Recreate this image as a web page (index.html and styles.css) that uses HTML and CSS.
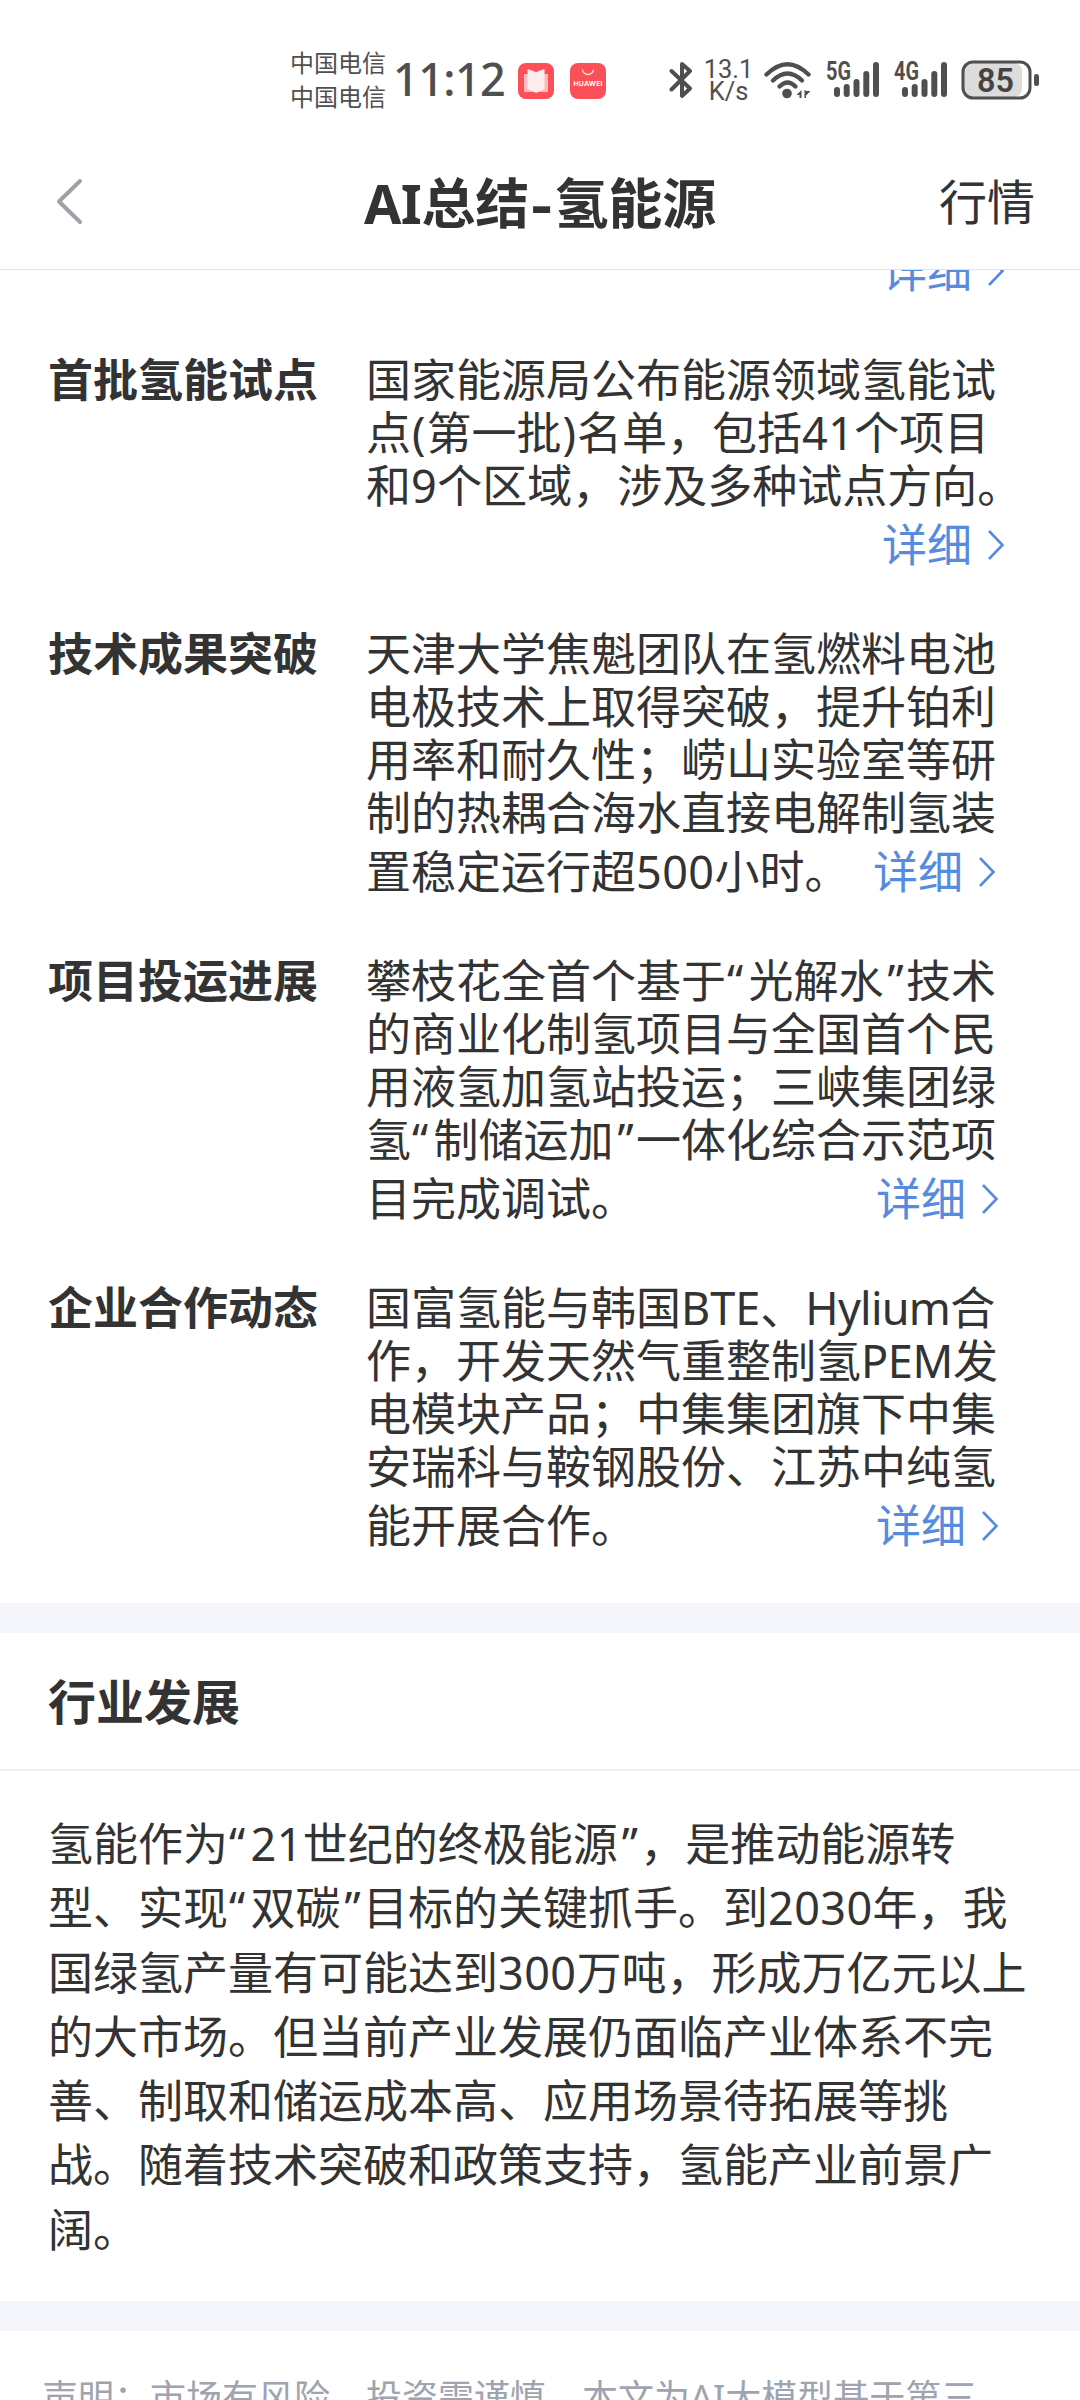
FILE: index.html
```html
<!DOCTYPE html>
<html lang="zh-CN">
<head>
<meta charset="utf-8">
<title>AI总结-氢能源</title>
<link rel="stylesheet" href="styles.css">
</head>
<body>
<div class="status">
  <div class="carriers"><span>中国电信</span><span>中国电信</span></div>
  <div class="clock">11:12</div>
  <svg class="app app-book" width="36" height="36" viewBox="0 0 36 36"><rect width="36" height="36" rx="8" fill="#fb5058"/><path d="M6 11h24v18H21l-3 1-3-1H6z" fill="#ffb9bb"/><path d="M9.500 6l8.500 3 8.500-3v20L18 29.500 9.500 26z" fill="#ffecec"/><path d="M15 6l3 3.500L21 6z" fill="#fb5058"/></svg>
  <svg class="app app-store" width="36" height="36" viewBox="0 0 36 36"><rect width="36" height="36" rx="8" fill="#fb5058"/><path d="M12.500 6.500a5.500 5 0 0 0 11 0" fill="none" stroke="#ffdcdc" stroke-width="1.300"/><text x="18" y="22.700" text-anchor="middle" textLength="29" font-size="6.800" font-weight="700" fill="#fff">HUAWEI</text></svg>
  <svg class="bt" width="24" height="38" viewBox="0 0 24 38" fill="none" stroke="#4f4f4f" stroke-width="4" stroke-linecap="round" stroke-linejoin="round"><path d="M2.500 10l18.500 17.500-8 7.500V3l8 7L2.500 28.500"/></svg>
  <div class="speed"><span>13.1</span><span>K/s</span></div>
  <svg class="wifi" width="48" height="38" viewBox="0 0 48 38"><g fill="none" stroke="#4f4f4f" stroke-width="4.400" stroke-linecap="round"><path d="M2.500 13.500Q23.500-7 44.500 13.500"/><path d="M9 19.500Q23.500 5.500 38 19.500"/><path d="M15.500 25.500Q23.500 17.500 31.500 25.500"/></g><circle cx="23" cy="32.500" r="4.800" fill="#4f4f4f"/><path d="M37.500 29v8h-2v-3h-3zM40.500 29v8h1.500v-2.500l4.500-4.500h-4z" fill="#4f4f4f"/></svg>
  <svg class="cell" width="54" height="38" viewBox="0 0 54 38"><text x="0" y="18.500" textLength="25" lengthAdjust="spacingAndGlyphs" font-size="25" font-weight="700" fill="#4f4f4f">5G</text><g stroke="#4f4f4f" stroke-width="6" stroke-linecap="round"><path d="M11 29v4M20.700 26v7M30.500 21v12M40.300 13v20M50 4v29"/></g></svg>
  <svg class="cell" width="54" height="38" viewBox="0 0 54 38"><text x="0" y="18.500" textLength="25" lengthAdjust="spacingAndGlyphs" font-size="25" font-weight="700" fill="#4f4f4f">4G</text><g stroke="#4f4f4f" stroke-width="6" stroke-linecap="round"><path d="M11 29v4M20.700 26v7M30.500 21v12M40.300 13v20M50 4v29"/></g></svg>
  <svg class="battery" width="80" height="40" viewBox="0 0 80 40"><rect x="3" y="3" width="58" height="34" rx="8" fill="#dcdcdc"/><rect x="2" y="2" width="67" height="36" rx="10" fill="none" stroke="#4f4f4f" stroke-width="3"/><rect x="73" y="14" width="5" height="12" rx="2.500" fill="#4f4f4f"/><text x="34.500" y="32" text-anchor="middle" font-size="34" font-weight="600" textLength="37" lengthAdjust="spacingAndGlyphs" fill="#444">85</text></svg>
</div>
<header class="header">
  <svg class="back" width="27" height="47" viewBox="0 0 27 47" fill="none" stroke="#a0a0a9" stroke-width="4" stroke-linecap="round" stroke-linejoin="round"><path d="M24 3L3 23.500 24 44"/></svg>
  <h1><span class="ai">AI</span>总结<span class="dash">-</span>氢能源</h1>
  <a class="quote">行情</a>
</header>
<main class="list">
  <section class="item item-cut">
    <div class="body"><p class="last"><a class="more">详细<svg width="18" height="32" viewBox="0 0 18 32"><path d="M2 2l13.500 14L2 30"/></svg></a></p></div>
  </section>
  <section class="item">
    <h2>首批氢能试点</h2>
    <div class="body"><p>国家能源局公布能源领域氢能试</p><p>点<i class="paren">(</i>第一批<i class="paren">)</i>名单，包括<b>41</b>个项目</p><p>和<b>9</b>个区域，涉及多种试点方向。</p><p class="last"><a class="more">详细<svg width="18" height="32" viewBox="0 0 18 32"><path d="M2 2l13.500 14L2 30"/></svg></a></p></div>
  </section>
  <section class="item">
    <h2>技术成果突破</h2>
    <div class="body"><p>天津大学焦魁团队在氢燃料电池</p><p>电极技术上取得突破，提升铂利</p><p>用率和耐久性；崂山实验室等研</p><p>制的热耦合海水直接电解制氢装</p><p class="last">置稳定运行超<b>500</b>小时。<a class="more inset-l">详细<svg width="18" height="32" viewBox="0 0 18 32"><path d="M2 2l13.500 14L2 30"/></svg></a></p></div>
  </section>
  <section class="item">
    <h2>项目投运进展</h2>
    <div class="body"><p>攀枝花全首个基于<i class="open">“</i>光解水<i class="close">”</i>技术</p><p>的商业化制氢项目与全国首个民</p><p>用液氢加氢站投运；三峡集团绿</p><p>氢<i class="open">“</i>制储运加<i class="close">”</i>一体化综合示范项</p><p class="last">目完成调试。<a class="more inset-s">详细<svg width="18" height="32" viewBox="0 0 18 32"><path d="M2 2l13.500 14L2 30"/></svg></a></p></div>
  </section>
  <section class="item">
    <h2>企业合作动态</h2>
    <div class="body"><p>国富氢能与韩国BTE、<span class="hyl">Hylium</span>合</p><p>作，开发天然气重整制氢<span class="pem">PEM</span>发</p><p>电模块产品；中集集团旗下中集</p><p>安瑞科与鞍钢股份、江苏中纯氢</p><p class="last">能开展合作。<a class="more inset-s">详细<svg width="18" height="32" viewBox="0 0 18 32"><path d="M2 2l13.500 14L2 30"/></svg></a></p></div>
  </section>
</main>
<section class="industry">
  <h2>行业发展</h2>
  <div class="article"><p>氢能作为<i class="open">“</i><b>21</b>世纪的终极能源<i class="close">”</i>，是推动能源转</p><p>型、实现<i class="open">“</i>双碳<i class="close">”</i>目标的关键抓手。到<b>2030</b>年，我</p><p>国绿氢产量有可能达到<b>300</b>万吨，形成万亿元以上</p><p>的大市场。但当前产业发展仍面临产业体系不完</p><p>善、制取和储运成本高、应用场景待拓展等挑</p><p>战。随着技术突破和政策支持，氢能产业前景广</p><p>阔。</p></div>
</section>
<footer class="notice">声明：市场有风险，投资需谨慎，本文为AI大模型基于第三</footer>
</body>
</html>
```
FILE: styles.css
```css
* { box-sizing: border-box; margin: 0; padding: 0; }
body {
  width: 1080px; height: 2400px; overflow: hidden; background: #fff; color: #333;
  display: flex; flex-direction: column;
  font-family: "Noto Sans", "Noto Sans CJK SC", sans-serif; font-size: 45px; white-space: nowrap;
}
body > * { flex: none; }
i, b { font-style: normal; font-weight: 400; }

.status { height: 134px; padding: 26px 0 0 290px; display: flex; align-items: flex-start; color: #4f4f4f; }
.status svg { flex: none; }
.status text { font-family: Roboto, sans-serif; }
.carriers { width: 103px; margin-top: 20px; display: flex; flex-direction: column; font-size: 24px; line-height: 34px; }
.clock { width: 125px; margin-top: 28px; font-size: 45px; line-height: 50px; font-weight: 500; letter-spacing: -.6px; }
.app { margin-top: 37px; }
.app-store { margin-left: 16px; }
.status .app-store text { font-family: Inter, sans-serif; }
.bt { margin: 35px 0 0 63px; }
.speed { width: 71px; margin-top: 32px; display: flex; flex-direction: column; align-items: center; font: 25.500px/22px Roboto, sans-serif; }
.wifi { margin-top: 35px; }
.cell { margin: 35px 0 0 14px; }
.battery { margin: 34px 0 0 13px; }

.header { height: 136px; padding: 0 45px 0 56px; display: grid; grid-template-columns: 308px 1fr auto; align-items: center; border-bottom: 1px solid #e4e4e6; }
.header h1 { padding-top: 3px; font-size: 54px; line-height: 80px; font-weight: 700; }
.ai { letter-spacing: -.5px; }
.dash { display: inline-block; width: 25px; text-align: center; transform: scaleX(1.2); }
.quote { padding-top: 1px; font-size: 48px; line-height: 70px; }

.list { height: 1333px; overflow: hidden; }
.item { display: flex; padding: 0 75px 50px 48px; }
.item-cut { margin-top: -32px; padding-left: 366px; }
.item h2 { width: 318px; font-size: 45px; line-height: 53px; font-weight: 700; }
.body { width: 639px; line-height: 53px; }
.body p { height: 53px; }
.body .last { height: 65px; line-height: 65px; display: flex; }
.more { margin-left: auto; display: flex; align-items: center; gap: 15px; color: #568be0; }
.more path { fill: none; stroke: #568be0; stroke-width: 2.600; }
.inset-l { margin-right: 9px; }
.inset-s { margin-right: 6px; }
.open, .close { display: inline-block; width: 22.500px; }
.open { padding-left: 1px; }
.close { padding-left: 4px; }
.paren { display: inline-block; width: 15.500px; text-align: center; }
.hyl { letter-spacing: -.75px; }
.pem { letter-spacing: -.4px; }
b { letter-spacing: .4px; }

.industry { border-top: 30px solid #f5f6fb; border-bottom: 30px solid #f5f6fb; height: 728px; }
.industry h2 { height: 138px; padding-left: 48px; border-bottom: 2px solid #f1f1f3; font-size: 48px; line-height: 138px; font-weight: 700; }
.article { padding: 41px 0 0 48px; line-height: 64.250px; }
.notice { height: 69px; overflow: hidden; padding: 40px 0 0 42px; font-size: 36px; line-height: 54px; color: #a0a3b0; }
```
